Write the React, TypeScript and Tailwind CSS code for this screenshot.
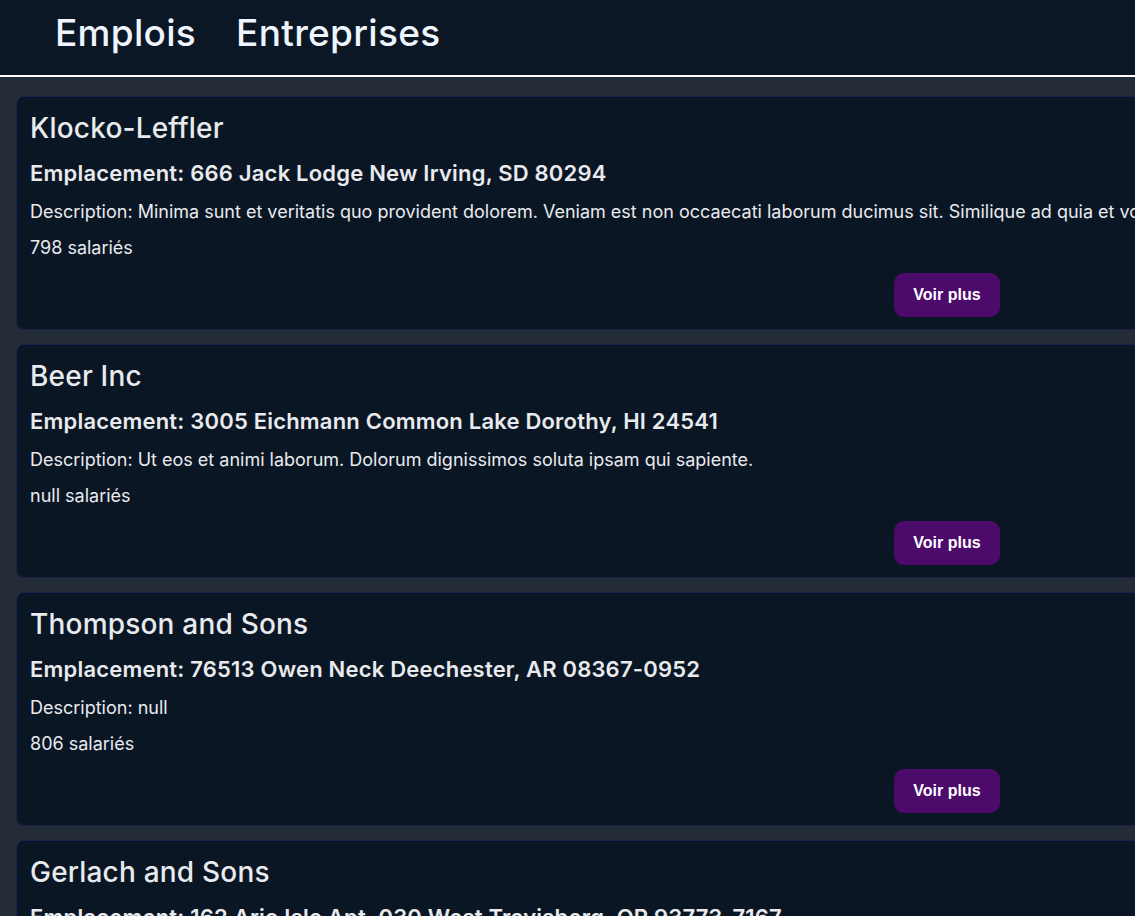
const companies = [
  {
    name: "Klocko-Leffler",
    address: "666 Jack Lodge New Irving, SD 80294",
    description:
      "Minima sunt et veritatis quo provident dolorem. Veniam est non occaecati laborum ducimus sit. Similique ad quia et voluptas.",
    employees: "798",
  },
  {
    name: "Beer Inc",
    address: "3005 Eichmann Common Lake Dorothy, HI 24541",
    description: "Ut eos et animi laborum. Dolorum dignissimos soluta ipsam qui sapiente.",
    employees: "null",
  },
  {
    name: "Thompson and Sons",
    address: "76513 Owen Neck Deechester, AR 08367-0952",
    description: "null",
    employees: "806",
  },
  {
    name: "Gerlach and Sons",
    address: "162 Ario Isle Apt. 030 West Travisberg, OR 93773-7167",
    description: "Quia voluptatem et qui fugiat.",
    employees: "412",
  },
];

const CompanyCard = ({ company }: { company: (typeof companies)[number] }) => {
  return (
    <div className="w-[1180px] shrink-0 bg-[#0b1624] border border-[#1a2350] rounded-[8px] pt-[14px] pb-[12px] px-[13px] text-[#e8eaee]">
      <h2 className="text-[28px] leading-[34px] font-medium tracking-[0.2px] whitespace-nowrap">
        {company.name}
      </h2>
      <p className="mt-[14px] text-[22px] leading-[28px] font-semibold tracking-[0.2px] whitespace-nowrap">
        Emplacement: {company.address}
      </p>
      <p className="mt-[12px] text-[18px] leading-[26px] whitespace-nowrap">
        Description: {company.description}
      </p>
      <p className="mt-[10px] text-[18px] leading-[26px]">{company.employees} salariés</p>
      <div className="mt-[12px] ml-[864px]">
        <button className="w-[106px] h-[44px] rounded-[10px] bg-[#4c0a6b] text-white text-[16px] font-bold font-['Liberation_Sans',Arial,sans-serif]">
          Voir plus
        </button>
      </div>
    </div>
  );
};

const App = () => {
  return (
    <div className="w-full h-[916px] overflow-hidden bg-[#242c37] font-['Inter',sans-serif]">
      <header className="h-[77px] bg-[#0b1724] border-b-2 border-white flex items-center gap-[40px] pl-[55px] pb-[10px]">
        <a className="text-[37px] font-medium tracking-[0.3px] text-[#eef5ff]">Emplois</a>
        <a className="text-[37px] font-medium tracking-[0.3px] text-[#eef5ff]">Entreprises</a>
      </header>
      <main className="flex flex-col gap-[14px] pt-[19px] pl-[16px]">
        {companies.map((c) => (
          <CompanyCard key={c.name} company={c} />
        ))}
      </main>
    </div>
  );
};

export default App;
